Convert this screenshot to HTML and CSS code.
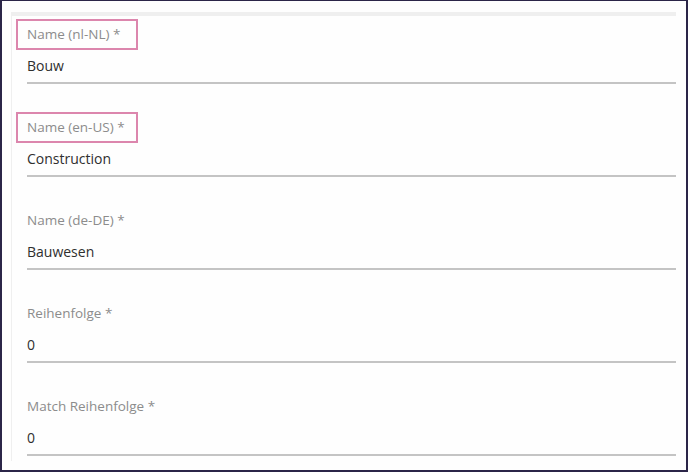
FILE: index.html
```html
<!DOCTYPE html>
<html>
<head>
  <title>Categorie bewerken</title>
  <link rel="stylesheet" href="styles.css">
</head>
<body>
  <div class="frame">
    <div class="panel">
      <div class="field">
        <label class="field-label"><span class="marked">Name (nl-NL) *</span></label>
        <div class="field-value">Bouw</div>
      </div>
      <div class="field">
        <label class="field-label"><span class="marked">Name (en-US) *</span></label>
        <div class="field-value">Construction</div>
      </div>
      <div class="field">
        <label class="field-label">Name (de-DE) *</label>
        <div class="field-value">Bauwesen</div>
      </div>
      <div class="field">
        <label class="field-label">Reihenfolge *</label>
        <div class="field-value">0</div>
      </div>
      <div class="field">
        <label class="field-label">Match Reihenfolge *</label>
        <div class="field-value">0</div>
      </div>
    </div>
  </div>
</body>
</html>
```

FILE: styles.css
```css
* {
  box-sizing: border-box;
}

body {
  margin: 0;
  font-family: "Open Sans", "Noto Sans", sans-serif;
  background-color: #ffffff;
}

.frame {
  width: 688px;
  height: 472px;
  border: 2px solid #2b2548;
  border-top-width: 1px;
  padding: 11px 10px 10px 9px;
  background-color: #fefefe;
  overflow: hidden;
}

.panel {
  height: 449px;
  border-top: 4px solid #efefef;
  border-left: 1px solid #efefef;
  padding: 8px 0 0 15px;
}

.field {
  margin-bottom: 33px;
  border-bottom: 2px solid #c4c4c4;
  padding-bottom: 6px;
}

.field-label {
  display: block;
  height: 20px;
  line-height: 20px;
  font-size: 13.5px;
  color: #8c8c8c;
  margin-bottom: 12px;
}

.marked {
  display: inline-block;
  width: 122px;
  margin: -5px 0 -6px -11px;
  padding: 3px 0 4px 9px;
  border: 2px solid #dc86ad;
}

.field-value {
  height: 20px;
  line-height: 20px;
  font-size: 14px;
  color: #2f2f2f;
}
```
